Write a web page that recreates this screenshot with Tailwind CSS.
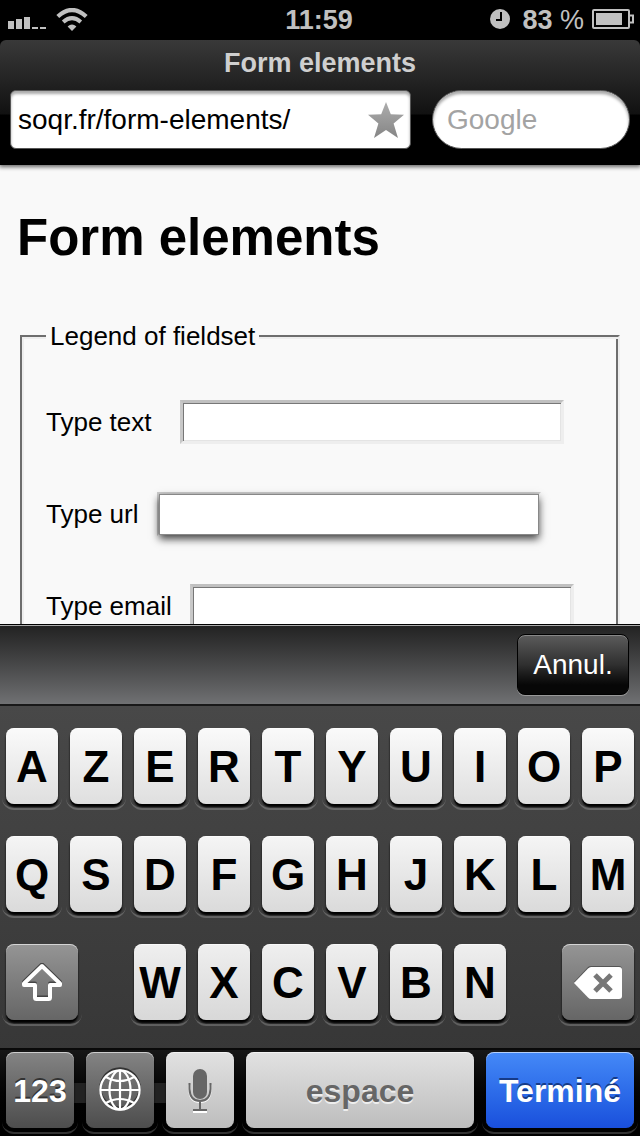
<!DOCTYPE html>
<html lang="fr">
<head>
<meta charset="utf-8">
<meta name="viewport" content="width=device-width, initial-scale=1">
<title>Form elements</title>
<script src="https://cdn.jsdelivr.net/npm/@tailwindcss/browser@4"></script>
</head>
<body class="bg-black font-['Liberation_Sans',Arial,sans-serif]">
<div class="flex h-screen flex-col overflow-hidden">

  <!-- Status bar -->
  <div class="grid h-10 shrink-0 grid-cols-3 items-center pr-1.5 pl-2 text-[27px] leading-10 font-bold text-[#c0c0c0]">
    <div class="flex items-center gap-2.5">
      <svg class="mt-1.5 h-3 w-[38px]" viewBox="0 0 38 12" fill="#c0c0c0" aria-hidden="true"><path d="M0 4h6v8H0zM8 2h6v10H8zM16 0h6v12h-6zM24 10h6v2h-6zM32 10h6v2h-6z"/></svg>
      <svg class="h-6 w-8" viewBox="0 0 32 24" fill="none" stroke="#c0c0c0" aria-hidden="true"><path d="M1.800 8.500Q16-4.500 30.200 8.500" stroke-width="4.200"/><path d="M7.200 14.100Q16 6.300 24.800 14.100" stroke-width="4"/><path d="M11.600 18.500Q16 14.500 20.400 18.500L16 23Z" fill="#c0c0c0" stroke="none"/></svg>
    </div>
    <div class="pr-1 text-center">11:59</div>
    <div class="flex items-center justify-end gap-2">
      <svg class="mr-1 mb-0.5 size-5 shrink-0" viewBox="0 0 20 20" aria-hidden="true"><circle cx="10" cy="10" r="10" fill="#c0c0c0"/><path d="M11 3v8H6" fill="none" stroke="#000" stroke-width="2"/></svg>
      <span class="whitespace-nowrap">83 <span class="font-normal">%</span></span>
      <svg class="mb-0.5 h-5 w-[42px] shrink-0" viewBox="0 0 42 20" fill="none" stroke="#c0c0c0" stroke-width="2" aria-hidden="true"><rect x="1" y="1" width="36" height="18" rx="1"/><path d="M37 6.500h4v7h-4"/><path d="M4 4h26v12H4z" fill="#c0c0c0" stroke="none"/></svg>
    </div>
  </div>

  <!-- Address bar -->
  <header class="relative z-10 flex h-[125px] shrink-0 flex-col rounded-t-md bg-[linear-gradient(#393939,#111_74px,#000_75px)] shadow-[0_1px_4px_1px_#0009]">
    <div class="h-[50px] text-center text-[27px] leading-[46px] font-bold text-[#cfcfcf]">Form elements</div>
    <div class="flex h-[59px] gap-[21px] px-2.5">
      <div class="flex min-w-0 flex-1 items-center rounded-md border border-[#555] bg-white pr-1.5 pl-[7px] shadow-[inset_0_3px_3px_#0005]">
        <input class="min-w-0 flex-1 bg-transparent text-[28px] text-black outline-none" type="text" value="soqr.fr/form-elements/" aria-label="Adresse">
        <button type="button" class="shrink-0" aria-label="Ajouter aux signets">
          <svg class="size-9" viewBox="0 0 36 36" aria-hidden="true"><defs><linearGradient id="star" x2="0" y2="1"><stop stop-color="#adadad"/><stop offset="1" stop-color="#858585"/></linearGradient></defs><path d="M18 0l4.800 12.300L36 12.700 25.600 21.500 30 36 18 28 6 36l4.400-14.500L0 12.700l13.200-.4z" fill="url(#star)"/></svg>
        </button>
      </div>
      <input class="w-[198px] shrink-0 rounded-[30px] border border-[#555] bg-white px-3.5 text-[28px] text-black shadow-[inset_0_3px_3px_#0005] outline-none placeholder:text-[#a3a3a3]" type="search" placeholder="Google" aria-label="Recherche">
    </div>
  </header>

  <!-- Page -->
  <main class="min-h-0 flex-1 overflow-hidden bg-[#f9f9f9] text-[26px] text-black">
    <h1 class="px-[17px] pt-10 text-[51px] leading-[66px] font-bold">Form elements</h1>
    <fieldset class="mx-5 mt-[49px] border-2 border-[#6e6e6e] border-r-[#eee] px-6 pb-10 shadow-[inset_2px_2px_0_#eee,inset_-2px_0_0_#6e6e6e]">
      <legend class="bg-[#f9f9f9] px-1 leading-8">Legend of fieldset</legend>
      <div class="flex flex-col gap-12 pt-12">
        <div class="flex h-11 items-center gap-7">
          <label for="f-text">Type text</label>
          <input id="f-text" type="text" class="h-11 w-96 border-3 border-[#eee] border-t-[#c0c0c0] border-l-[#c8c8c8] bg-white outline-none shadow-[inset_1px_1px_0_#777,inset_-1px_-1px_0_#e4e4e4]">
        </div>
        <div class="flex h-11 items-center gap-[18px]">
          <label for="f-url">Type url</label>
          <div class="h-11 w-96 border-2 border-transparent border-t-[#ccc] border-l-[#ccc]">
            <input id="f-url" type="url" class="block h-[41px] w-full border border-[#888] bg-white shadow-[0_4px_8px_#000b] outline-none">
          </div>
        </div>
        <div class="flex h-11 items-center gap-[18px]">
          <label for="f-email">Type email</label>
          <input id="f-email" type="email" class="h-11 w-96 border-3 border-[#eee] border-t-[#c0c0c0] border-l-[#c8c8c8] bg-white outline-none shadow-[inset_1px_1px_0_#777,inset_-1px_-1px_0_#e4e4e4]">
        </div>
      </div>
    </fieldset>
  </main>

  <!-- Accessory bar -->
  <div class="flex h-20 shrink-0 items-center justify-end border-t border-black bg-linear-to-b from-[#222] to-[#707173] pr-[11px] shadow-[inset_0_1px_0_#aaa]">
    <button type="button" class="h-[61px] w-28 rounded-lg border border-black bg-linear-to-b from-[#5c5c5c] via-[#303030] to-[#070707] to-85% text-[28px] text-white shadow-[inset_0_1px_0_#888,0_1px_0_#999]">Annul.</button>
  </div>

  <!-- Keyboard -->
  <div class="shrink-0 border-t-2 border-[#191919] bg-linear-to-b from-[#484848] to-[#333] text-[44px] font-bold text-black
    [&_button]:relative [&_button]:flex [&_button]:h-19 [&_button]:items-center [&_button]:justify-center [&_button]:rounded-lg [&_button]:pt-0.5 [&_button]:shadow-[inset_0_1px_0_#fff9,0_3px_2px_#000]
    [&_button]:after:absolute [&_button]:after:-inset-x-1 [&_button]:after:-bottom-1.5 [&_button]:after:h-3 [&_button]:after:rounded-b-xl [&_button]:after:border-b-2 [&_button]:after:border-white/20">
    <div class="flex flex-col gap-8 px-1.5 pt-[22px] pb-7">
      <div class="flex gap-3 text-shadow-[0_2px_0_#fff] [&>button]:flex-1 [&>button]:bg-linear-to-b [&>button]:from-[#fafafa] [&>button]:to-[#dfdfdf]">
        <button type="button">A</button><button type="button">Z</button><button type="button">E</button><button type="button">R</button><button type="button">T</button><button type="button">Y</button><button type="button">U</button><button type="button">I</button><button type="button">O</button><button type="button">P</button>
      </div>
      <div class="flex gap-3 text-shadow-[0_2px_0_#fff] [&>button]:flex-1 [&>button]:bg-linear-to-b [&>button]:from-[#f5f5f5] [&>button]:to-[#dadada]">
        <button type="button">Q</button><button type="button">S</button><button type="button">D</button><button type="button">F</button><button type="button">G</button><button type="button">H</button><button type="button">J</button><button type="button">K</button><button type="button">L</button><button type="button">M</button>
      </div>
      <div class="flex justify-between">
        <button type="button" class="w-18 bg-linear-to-b from-[#959595] to-[#666]" aria-label="Majuscule">
          <svg class="h-10 w-11" viewBox="0 0 44 40" fill="none" stroke-width="4" stroke-linejoin="round" aria-hidden="true"><path d="M22 3L40 20.500V22H30V34.500Q30 36 28.500 36H16.500Q15 36 15 34.500V22H4V20.500Z" stroke="#444" transform="translate(0 -1.500)"/><path d="M22 3L40 20.500V22H30V34.500Q30 36 28.500 36H16.500Q15 36 15 34.500V22H4V20.500Z" stroke="#fff"/></svg>
        </button>
        <div class="flex gap-3 text-shadow-[0_2px_0_#fff] [&>button]:w-13 [&>button]:bg-linear-to-b [&>button]:from-[#efefef] [&>button]:to-[#d8d8d8]">
          <button type="button">W</button><button type="button">X</button><button type="button">C</button><button type="button">V</button><button type="button">B</button><button type="button">N</button>
        </div>
        <button type="button" class="w-18 bg-linear-to-b from-[#959595] to-[#666]" aria-label="Effacer">
          <svg class="h-[34px] w-12" viewBox="0 0 48 34" aria-hidden="true"><path d="M0 16L14 1Q15 0 17 0H45Q48 0 48 3V15Z" fill="#555"/><path d="M0 17L14 2.500Q15.500 1 17 1H45Q48 1 48 4V30Q48 33 45 33H17Q15.500 33 14 31.500Z" fill="#fff"/><path d="M21 9L37 25M37 9L21 25" stroke="#777" stroke-width="5"/></svg>
        </button>
      </div>
    </div>
    <div class="relative isolate flex gap-3 border-t-2 border-[#090909] bg-linear-to-b from-[#171717] to-black px-1.5 pt-0.5 pb-2 text-[32px]">
      <div class="absolute top-[33px] left-16 -z-10 h-5 w-28 bg-[#222]"></div>
      <button type="button" class="w-17 bg-linear-to-b from-[#848484] to-[#4d4d4d] text-white text-shadow-[0_-2px_0_#333]">123</button>
      <button type="button" class="w-17 bg-linear-to-b from-[#848484] to-[#4d4d4d]" aria-label="Clavier suivant">
        <svg class="h-12 w-[42px]" viewBox="0 0 42 48" fill="none" stroke-width="2.200" aria-hidden="true"><circle cx="21" cy="21" r="19.600" stroke="#333"/><g stroke="#fff"><circle cx="21" cy="23" r="19.600"/><path d="M21 3.500v39M1.500 23h39"/><ellipse cx="21" cy="23" rx="10.500" ry="19.500"/><path d="M7 10Q21 18 35 10M7 36Q21 28 35 36"/></g></svg>
      </button>
      <button type="button" class="w-17 bg-linear-to-b from-[#e2e2e2] to-[#bdbdbd]" aria-label="Dictée">
        <svg class="h-11 w-6" viewBox="0 0 24 44" fill="none" aria-hidden="true"><path d="M1.500 16V22Q2 33 12 33T22.500 22V16M12 34V42M5 43H19" stroke="#fff" stroke-width="2"/><rect x="5" y="0" width="14" height="30" rx="7" fill="#666"/><path d="M1.500 14V20Q2 32 12 32T22.500 20V14M12 32V41M5 41H19" stroke="#666" stroke-width="2"/></svg>
      </button>
      <button type="button" class="flex-1 bg-linear-to-b from-[#e2e2e2] to-[#bdbdbd] text-[#666] text-shadow-[0_2px_0_#eee]">espace</button>
      <button type="button" class="w-37 bg-linear-to-b from-[#4589f7] to-[#1a4fdc] text-white text-shadow-[0_-2px_0_#163a86]">Terminé</button>
    </div>
  </div>
</div>
</body>
</html>
